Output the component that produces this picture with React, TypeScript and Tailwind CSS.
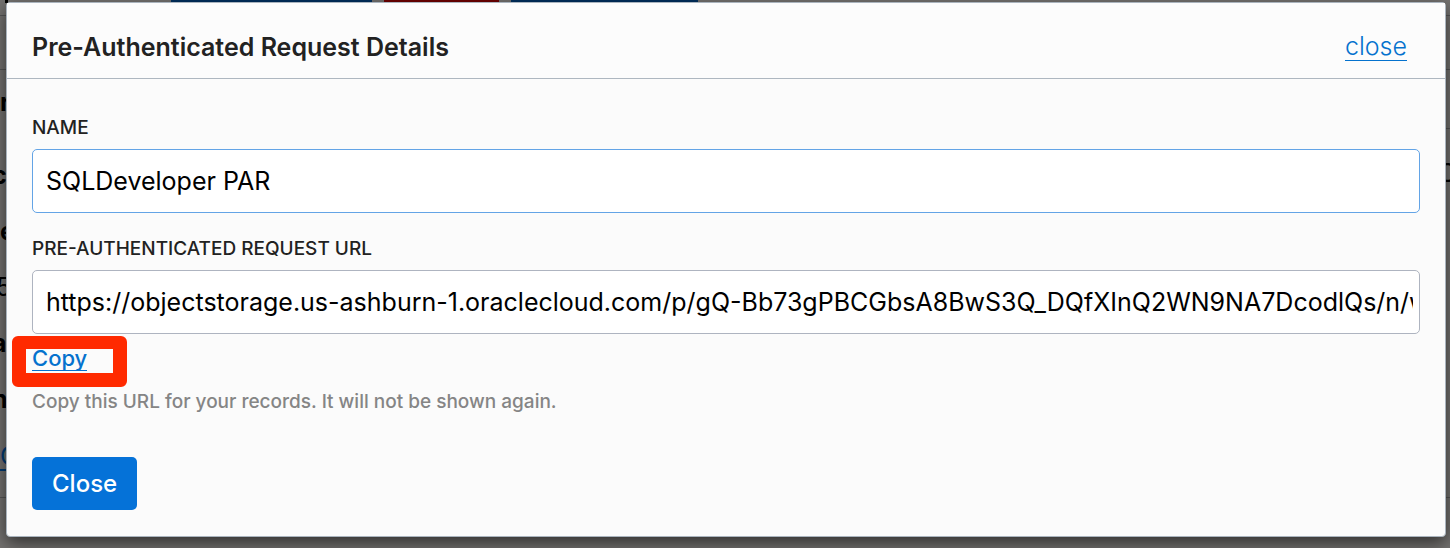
import React from "react";

const marginRows = [
  { text: "r", style: "h-[73px] font-bold" },
  { text: "co", style: "-ml-2 h-14 font-bold" },
  { text: "e", style: "h-14 font-bold" },
  { text: "5", style: "-ml-1 h-14" },
  { text: "a", style: "-ml-2 h-14 font-bold" },
  { text: "n", style: "-ml-2 h-[57px] font-bold" },
];

function PageBehind() {
  return (
    <div
      aria-hidden="true"
      className="col-start-1 row-start-1 flex flex-col overflow-hidden bg-[#757371] text-[25px] leading-8 text-black"
    >
      <div className="flex h-4 items-start border-b border-[#565656]">
        <span className="ml-[5px] h-[3px] w-[3px] bg-black" />
        <span className="ml-[163px] h-2 w-[201px] bg-[#003060]" />
        <span className="ml-3 h-2 w-[115px] bg-[#700000]" />
        <span className="ml-3 h-2 w-[187px] bg-[#003060]" />
      </div>
      <div className="h-[54px] border-b border-[#565656]" />
      <div className="flex items-start justify-between pt-4">
        <div className="flex w-[6px] flex-col overflow-hidden">
          {marginRows.map((row) => (
            <span key={row.text} className={row.style}>
              {row.text}
            </span>
          ))}
          <span className="h-[57px] text-[#003c75] underline underline-offset-4">C</span>
        </div>
        <div className="mt-[42px] w-1 border-t border-[#565656] pt-7">
          <span className="-ml-2">C</span>
        </div>
      </div>
      <div className="border-t border-[#565656]" />
    </div>
  );
}

export default function App() {
  return (
    <div className="grid min-h-screen grid-cols-1 grid-rows-1 overflow-hidden font-['Inter',sans-serif]">
      <PageBehind />
      <section
        role="dialog"
        aria-labelledby="dialog-title"
        className="z-10 col-start-1 row-start-1 mt-[2px] mr-1 mb-[11px] ml-[6px] rounded-[4px] border border-[#aab4be] bg-[#fbfbfb] shadow-[0_6px_18px_rgba(0,0,0,0.6)]"
      >
        <header className="flex h-[76px] items-center justify-between border-b border-[#aeb7c0] bg-[#fcfcfc] pt-3 pr-[38px] pl-[25px]">
          <h1 id="dialog-title" className="text-[25px] leading-7 font-semibold text-[#222]">
            Pre-Authenticated Request Details
          </h1>
          <a href="#close" className="border-b border-[#0572ce] text-[25px] leading-7 font-light text-[#0572ce]">
            close
          </a>
        </header>
        <form className="flex flex-col items-start px-[25px] pt-[37px]" onSubmit={(e) => e.preventDefault()}>
          <label htmlFor="par-name" className="text-[19px] leading-6 font-medium text-[#222]">
            NAME
          </label>
          <input
            id="par-name"
            type="text"
            defaultValue="SQLDeveloper PAR"
            className="mt-[9px] h-16 w-full rounded-[5px] border border-[#63a4e6] bg-white px-[13px] text-[25px] text-black outline-none"
          />
          <label htmlFor="par-url" className="mt-6 text-[19px] leading-6 font-medium text-[#222]">
            PRE-AUTHENTICATED REQUEST URL
          </label>
          <input
            id="par-url"
            type="text"
            readOnly
            defaultValue="https://objectstorage.us-ashburn-1.oraclecloud.com/p/gQ-Bb73gPBCGbsA8BwS3Q_DQfXInQ2WN9NA7DcodlQs/n/w"
            className="mt-[9px] h-16 w-full rounded-[5px] border border-[#aeb4c0] bg-white pr-[6px] pl-[13px] text-[25px] text-black outline-none"
          />
          <div className="relative mt-3 h-7">
            <span className="absolute -top-[10px] -left-[20px] h-[51px] w-[115px] rounded-[6px] border-[14px] border-t-[13px] border-[#ff2a00]" />
            <a href="#copy" className="relative block border-b border-[#0572ce] text-[22px] leading-6 font-medium text-[#0572ce]">
              Copy
            </a>
          </div>
          <p className="mt-4 text-[19px] leading-6 font-medium text-[#858585]">
            Copy this URL for your records. It will not be shown again.
          </p>
          <button type="button" className="mt-[43px] h-[53px] rounded-[5px] bg-[#0572d8] px-5 text-2xl font-medium text-white">
            Close
          </button>
        </form>
      </section>
    </div>
  );
}
